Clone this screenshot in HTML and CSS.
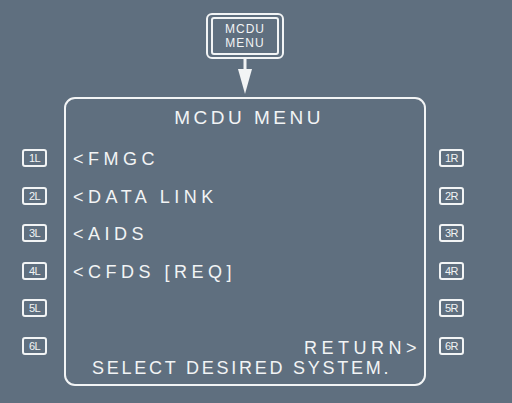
FILE: index.html
```html
<!DOCTYPE html>
<html lang="en">

<head>
  <meta charset="UTF-8" />
  <meta name="viewport" content="width=device-width, initial-scale=1.0" />
  <title>MCDU Menu</title>
  <link rel="stylesheet" href="styles.css">
</head>

<body>
  <div class="top">
    <div class="menu-key">
      <div class="menu-key-inner">
        <span>MCDU</span>
        <span>MENU</span>
      </div>
    </div>
    <svg class="arrow" width="16" height="38" viewBox="0 0 16 38">
      <rect x="6.5" y="0" width="3" height="12" fill="#f2f4f5" />
      <polygon points="1,10 15,10 8,35" fill="#f2f4f5" />
    </svg>
  </div>

  <div class="main">
    <div class="keys left">
      <div class="lsk">1L</div>
      <div class="lsk">2L</div>
      <div class="lsk">3L</div>
      <div class="lsk">4L</div>
      <div class="lsk">5L</div>
      <div class="lsk">6L</div>
    </div>

    <div class="screen">
      <div class="title">MCDU MENU</div>
      <div class="item">&lt;FMGC</div>
      <div class="item">&lt;DATA LINK</div>
      <div class="item">&lt;AIDS</div>
      <div class="item">&lt;CFDS [REQ]</div>
      <div class="spacer"></div>
      <div class="item return">RETURN&gt;</div>
      <div class="scratch">SELECT DESIRED SYSTEM.</div>
    </div>

    <div class="keys right">
      <div class="lsk">1R</div>
      <div class="lsk">2R</div>
      <div class="lsk">3R</div>
      <div class="lsk">4R</div>
      <div class="lsk">5R</div>
      <div class="lsk">6R</div>
    </div>
  </div>
</body>

</html>
```

FILE: styles.css
```css
body {
  margin: 0;
  font-family: "Liberation Sans", Arial, sans-serif;
  background: #5f6f7f;
  color: #f2f4f5;
  width: 512px;
  height: 403px;
  overflow: hidden;
}

.top {
  padding-top: 13px;
  padding-left: 206px;
  height: 84px;
}

.menu-key {
  width: 78px;
  height: 46px;
  box-sizing: border-box;
  border: 2px solid #f2f4f5;
  border-radius: 6px;
  padding: 2px 3px;
}

.menu-key-inner {
  height: 100%;
  box-sizing: border-box;
  border: 2px solid #f2f4f5;
  border-radius: 3px;
  display: flex;
  flex-direction: column;
  align-items: center;
  justify-content: center;
  font-size: 12px;
  line-height: 14px;
  letter-spacing: 1px;
}

.arrow {
  display: block;
  margin-left: 31px;
}

.main {
  display: flex;
  align-items: flex-start;
}

.keys {
  display: flex;
  flex-direction: column;
  gap: 19.5px;
  padding-top: 52px;
}

.keys.left {
  width: 64px;
  box-sizing: border-box;
  padding-left: 22px;
}

.keys.right {
  margin-left: 13px;
}

.lsk {
  width: 25px;
  height: 18px;
  box-sizing: border-box;
  border: 2px solid #f2f4f5;
  border-radius: 3px;
  font-size: 11px;
  line-height: 14px;
  text-align: center;
  letter-spacing: -0.5px;
}

.screen {
  width: 362px;
  height: 289px;
  box-sizing: border-box;
  border: 2px solid #f2f4f5;
  border-radius: 11px;
  display: flex;
  flex-direction: column;
  padding: 0 3px 6px 7px;
}

.title {
  height: 38px;
  line-height: 38px;
  margin-bottom: 4px;
  font-size: 19px;
  letter-spacing: 3.5px;
  text-align: center;
  padding-left: 4px;
}

.item {
  height: 37.5px;
  line-height: 37.5px;
  font-size: 18px;
  letter-spacing: 4.5px;
  white-space: nowrap;
}

.spacer {
  flex: 1;
}

.item.return {
  height: 20px;
  line-height: 20px;
  text-align: right;
}

.scratch {
  height: 20px;
  line-height: 20px;
  font-size: 18px;
  letter-spacing: 2.75px;
  padding-left: 19px;
  white-space: nowrap;
}
```
